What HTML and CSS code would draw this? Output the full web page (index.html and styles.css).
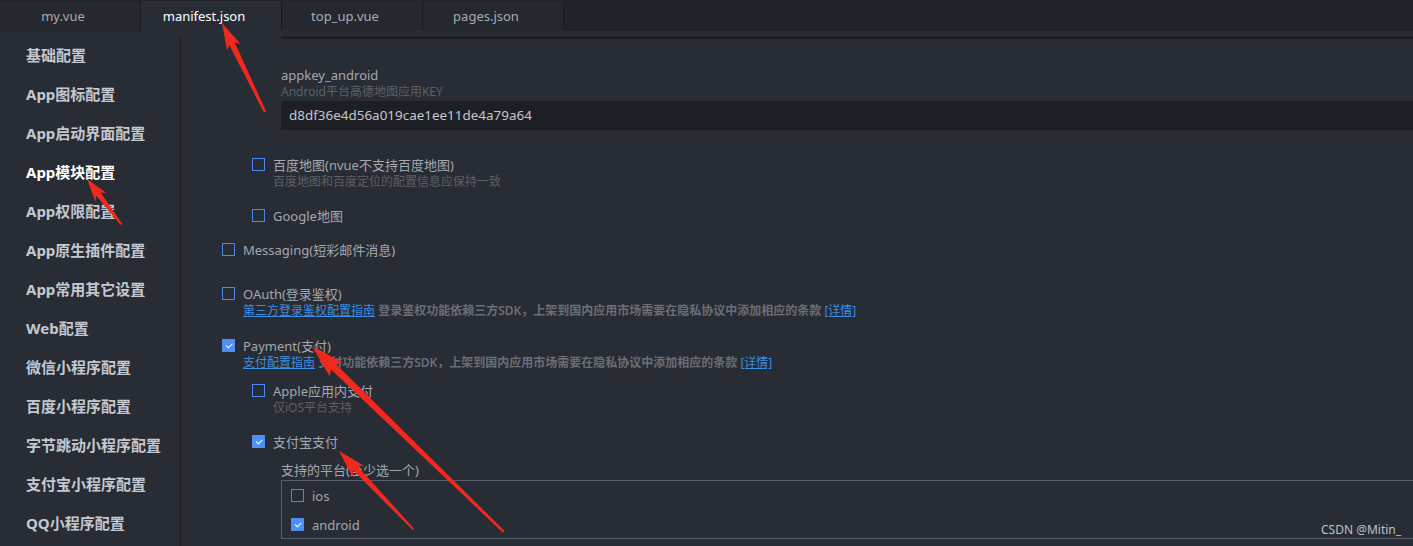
FILE: index.html
```html
<!DOCTYPE html>
<html lang="zh-CN">
<head>
<meta charset="utf-8">
<title>manifest.json</title>
<link rel="stylesheet" href="styles.css">
</head>
<body>
<div class="tabs">
  <div class="tab">my.vue</div>
  <div class="tab active">manifest.json</div>
  <div class="tab">top_up.vue</div>
  <div class="tab">pages.json</div>
</div>
<div class="main">
  <nav class="side">
    <div class="side-item">基础配置</div>
    <div class="side-item">App图标配置</div>
    <div class="side-item">App启动界面配置</div>
    <div class="side-item active">App模块配置</div>
    <div class="side-item">App权限配置</div>
    <div class="side-item">App原生插件配置</div>
    <div class="side-item">App常用其它设置</div>
    <div class="side-item">Web配置</div>
    <div class="side-item">微信小程序配置</div>
    <div class="side-item">百度小程序配置</div>
    <div class="side-item">字节跳动小程序配置</div>
    <div class="side-item">支付宝小程序配置</div>
    <div class="side-item">QQ小程序配置</div>
  </nav>
  <section class="content">
    <div class="prev-input"></div>
    <div class="field">
      <div class="field-label">appkey_android</div>
      <div class="field-desc">Android平台高德地图应用KEY</div>
      <div class="input">d8df36e4d56a019cae1ee11de4a79a64</div>
    </div>

    <div class="opt lvl2 m25">
      <div class="row"><span class="cb"></span><span class="lbl">百度地图(nvue不支持百度地图)</span></div>
      <div class="desc">百度地图和百度定位的配置信息应保持一致</div>
    </div>
    <div class="opt lvl2 m16">
      <div class="row"><span class="cb"></span><span class="lbl">Google地图</span></div>
    </div>
    <div class="opt m15">
      <div class="row"><span class="cb"></span><span class="lbl">Messaging(短彩邮件消息)</span></div>
    </div>
    <div class="opt m25">
      <div class="row"><span class="cb"></span><span class="lbl">OAuth(登录鉴权)</span></div>
      <div class="desc"><a class="link">第三方登录鉴权配置指南</a> <b class="note">登录鉴权功能依赖三方SDK，上架到国内应用市场需要在隐私协议中添加相应的条款</b> <a class="link">[详情]</a></div>
    </div>
    <div class="opt m17">
      <div class="row"><span class="cb on"></span><span class="lbl">Payment(支付)</span></div>
      <div class="desc"><a class="link">支付配置指南</a> <b class="note">支付功能依赖三方SDK，上架到国内应用市场需要在隐私协议中添加相应的条款</b> <a class="link">[详情]</a></div>
    </div>
    <div class="opt lvl2 m10">
      <div class="row"><span class="cb"></span><span class="lbl">Apple应用内支付</span></div>
      <div class="desc">仅iOS平台支持</div>
    </div>
    <div class="opt lvl2 m16">
      <div class="row"><span class="cb on"></span><span class="lbl">支付宝支付</span></div>
    </div>
    <div class="platforms">
      <div class="field-label">支持的平台(至少选一个)</div>
      <div class="pbox">
        <div class="row"><span class="cb"></span><span class="lbl">ios</span></div>
        <div class="row gap"><span class="cb on"></span><span class="lbl">android</span></div>
      </div>
    </div>
  </section>
</div>

<svg class="arrows" width="1413" height="546" viewBox="0 0 1413 546">
  <g fill="#f0281e">
    <polygon transform="translate(222,23) rotate(64.2)" points="0,0 27,-7.5 23,-3 99,-1.2 99,1.2 23,3 27,7.5"/>
    <polygon transform="translate(87,179) rotate(52.9)" points="0,0 23,-7 19,-2.6 57,-1 57,1 19,2.6 23,7"/>
    <polygon transform="translate(312,346) rotate(44.1)" points="0,0 34,-9.5 30,-3.6 267,-1.2 267,1.2 30,3.6 34,9.5"/>
    <polygon transform="translate(339,451) rotate(46.5)" points="0,0 28,-8 24,-3 108,-1 108,1 24,3 28,8"/>
  </g>
</svg>
<div class="watermark">CSDN @Mitin_</div>
</body>
</html>
```
FILE: styles.css
```css
html, body {
  margin: 0;
  padding: 0;
  width: 1413px;
  height: 546px;
  overflow: hidden;
  background: #282c34;
  font-family: "Noto Sans", "Noto Sans CJK SC", sans-serif;
}

.tabs {
  display: flex;
  height: 31px;
  background: #212329;
}
.tab {
  box-sizing: border-box;
  width: 141px;
  height: 30px;
  margin-top: 1px;
  padding-right: 14px;
  background: #25282e;
  border-right: 1px solid #1a1b1f;
  color: #a7abb2;
  font-size: 13px;
  line-height: 30px;
  text-align: center;
}
.tab.active {
  background: #282c34;
  color: #ffffff;
}

.main {
  display: flex;
  height: 515px;
}

.side {
  box-sizing: border-box;
  width: 181px;
  flex: none;
  margin-top: 5px;
  border-right: 1px solid #1c1e22;
  padding-left: 26px;
}
.side-item {
  height: 39px;
  line-height: 39px;
  font-size: 15px;
  font-weight: bold;
  color: #c3c8d1;
  white-space: nowrap;
}
.side-item.active {
  color: #ffffff;
}

.content {
  flex: 1;
  min-width: 0;
  padding-left: 41px;
}

.prev-input {
  margin-top: 5px;
  margin-left: 59px;
  height: 3px;
  background: #1d1e23;
}

.field {
  margin-top: 27px;
  margin-left: 59px;
}
.field-label {
  font-size: 13px;
  line-height: 18px;
  color: #a4a8b0;
}
.field-desc {
  font-size: 12px;
  line-height: 16px;
  color: #5c6068;
}
.input {
  margin-top: 1px;
  height: 29px;
  line-height: 29px;
  padding-left: 8px;
  background: #1e1f24;
  color: #c3c7cf;
  font-size: 13.45px;
}

.opt.lvl2 { margin-left: 30px; }
.m10 { margin-top: 10px; }
.m15 { margin-top: 15px; }
.m16 { margin-top: 16px; }
.m17 { margin-top: 17px; }
.m25 { margin-top: 25px; }

.row {
  display: flex;
  align-items: center;
  height: 19px;
}
.cb {
  box-sizing: border-box;
  position: relative;
  width: 13px;
  height: 13px;
  flex: none;
  border: 1px solid #4a88f0;
  margin-right: 8px;
}
.cb.on {
  background: #4f8ef5;
  border-color: #4f8ef5;
}
.cb.on::after {
  content: "";
  position: absolute;
  left: 3px;
  top: 2.5px;
  width: 5px;
  height: 2.5px;
  border-left: 1.3px solid #ffffff;
  border-bottom: 1.3px solid #ffffff;
  transform: rotate(-45deg);
}
.lbl {
  font-size: 13px;
  color: #a4a8b0;
  white-space: nowrap;
}
.desc {
  margin-left: 21px;
  font-size: 12px;
  line-height: 16px;
  color: #5c6068;
  white-space: nowrap;
}
.link {
  color: #3b8ee2;
  text-decoration: underline;
}
.note {
  font-weight: 600;
  color: #6a6e76;
}

.platforms {
  margin-top: 10px;
  margin-left: 59px;
}
.pbox {
  margin-top: 1px;
  margin-right: -20px;
  border: 1px solid #5a5f6d;
  padding: 5px 0 4px 9px;
}
.pbox .gap { margin-top: 10px; }

.arrows {
  position: absolute;
  left: 0;
  top: 0;
  pointer-events: none;
}
.watermark {
  position: absolute;
  left: 1321px;
  top: 521px;
  font-size: 12px;
  line-height: 18px;
  color: #bcc0c8;
}
```
